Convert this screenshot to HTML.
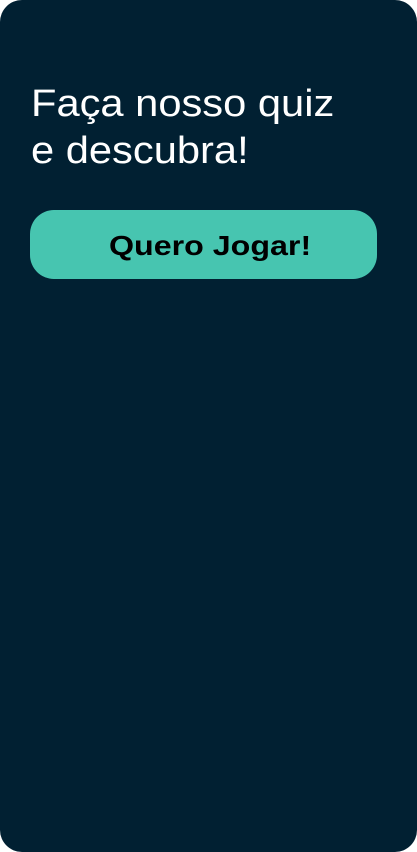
<!DOCTYPE html>
<html><head><style>
html,body{margin:0;padding:0;background:#fff;width:417px;height:852px;overflow:hidden}
.c{position:absolute;left:0;top:0;width:417px;height:852px;background:#012032;border-radius:22px}
h1{position:absolute;left:31px;top:81px;margin:0;font:400 38px/47px "Liberation Sans",sans-serif;color:#fff;white-space:nowrap;transform:scaleX(1.096);transform-origin:0 0}
.b{position:absolute;left:30px;top:210px;width:347px;height:69px;border-radius:24px;background:#47c5b0}
.b span{position:absolute;top:0;font:700 28px/71px "Liberation Sans",sans-serif;color:#000;left:79px;white-space:nowrap;transform:scaleX(1.15);transform-origin:0 0}
</style></head><body>
<div class="c">
<h1>Faça nosso quiz<br>e descubra!</h1>
<div class="b"><span>Quero Jogar!</span></div>
</div>
</body></html>
